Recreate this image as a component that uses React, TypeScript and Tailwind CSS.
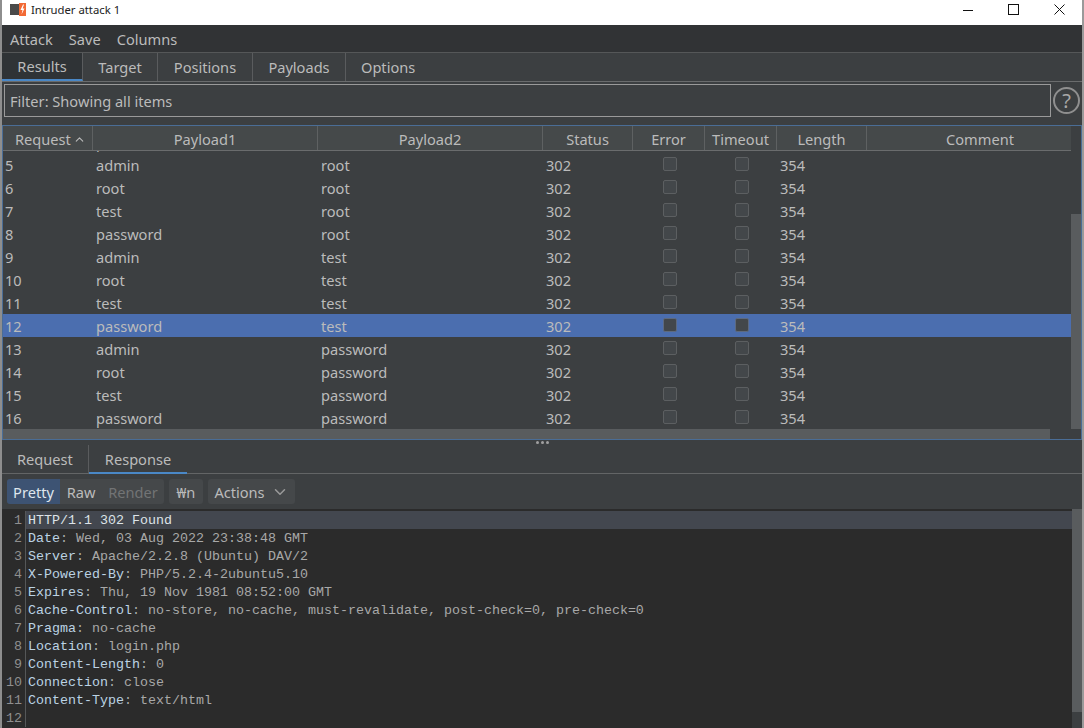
import { ChevronDown, ChevronUp } from 'lucide-react';

// Results table rows: request number, payload1, payload2
const rows: [number, string, string][] = [
    [4, 'password', 'admin'],
    [5, 'admin', 'root'],
    [6, 'root', 'root'],
    [7, 'test', 'root'],
    [8, 'password', 'root'],
    [9, 'admin', 'test'],
    [10, 'root', 'test'],
    [11, 'test', 'test'],
    [12, 'password', 'test'],
    [13, 'admin', 'password'],
    [14, 'root', 'password'],
    [15, 'test', 'password'],
    [16, 'password', 'password'],
];

const headers = ['Payload1', 'Payload2', 'Status', 'Error', 'Timeout', 'Length'];

// Response lines: header name and value
const responseLines: [string, string][] = [
    ['Date', 'Wed, 03 Aug 2022 23:38:48 GMT'],
    ['Server', 'Apache/2.2.8 (Ubuntu) DAV/2'],
    ['X-Powered-By', 'PHP/5.2.4-2ubuntu5.10'],
    ['Expires', 'Thu, 19 Nov 1981 08:52:00 GMT'],
    ['Cache-Control', 'no-store, no-cache, must-revalidate, post-check=0, pre-check=0'],
    ['Pragma', 'no-cache'],
    ['Location', 'login.php'],
    ['Content-Length', '0'],
    ['Connection', 'close'],
    ['Content-Type', 'text/html'],
];

const gridCols = 'grid grid-cols-[90px_225px_225px_90px_72px_72px_90px_1fr]';

const Checkbox = ({ selected }: { selected: boolean }) => (
    <div className="flex justify-center pl-[2px] -mt-px">
        <div
            className={`w-[14px] h-[14px] rounded-[2px] border ${
                selected ? 'bg-[#43474a] border-[#5d6a80]' : 'bg-[#43474a] border-[#5c5f61]'
            }`}
        />
    </div>
);

const App = () => {
    return (
        <div className="w-[1084px] h-[728px] overflow-hidden flex flex-col bg-[#3c3f41] text-[14.6px] leading-[20px] text-[#bbbbbb] font-['Noto_Sans',sans-serif] border-l-2 border-r-2 border-l-[#8e8e8e] border-r-[#9a9a9a]">
            {/* Title bar */}
            <div className="h-[25px] shrink-0 bg-white flex items-center text-black -mx-[2px] pl-[10px] pb-[6px]">
                <svg width="16" height="13" viewBox="0 0 16 13" className="mr-[5px]">
                    <rect x="0" y="1" width="9" height="11" fill="#4a4a4a" />
                    <rect x="9" y="0" width="7" height="13" fill="#f26a35" />
                    <path d="M13 1.5 L10.5 7 H12.5 L11.5 11.5 L14.5 5.5 H12.7 L14 1.5 Z" fill="#ffffff" />
                </svg>
                <span className="text-[11.3px] text-[#222222]">Intruder attack 1</span>
                <div className="ml-auto flex items-center pr-[19px] gap-[35px]">
                    <svg width="10" height="10" viewBox="0 0 10 10"><path d="M0 5.5H10" stroke="#111" strokeWidth="1" /></svg>
                    <svg width="11" height="11" viewBox="0 0 11 11"><rect x="0.5" y="0.5" width="10" height="10" fill="none" stroke="#111" /></svg>
                    <svg width="11" height="11" viewBox="0 0 11 11"><path d="M0.5 0.5L10.5 10.5M10.5 0.5L0.5 10.5" stroke="#111" strokeWidth="1" /></svg>
                </div>
            </div>

            {/* Menu bar */}
            <div className="h-[28px] shrink-0 bg-[#313335] flex items-center gap-[16px] pl-[8px] border-b border-[#555758]">
                <span>Attack</span>
                <span>Save</span>
                <span>Columns</span>
            </div>

            {/* Main tabs */}
            <div className="h-[29px] shrink-0 flex border-b border-[#6a6c6d]">
                <div className="w-[81px] flex items-center justify-center bg-[#2f3336] border-b-[2px] border-[#4a88c7] border-r border-r-[#5a5c5e]">
                    Results
                </div>
                <div className="w-[75px] flex items-center justify-center border-r border-[#5a5c5e]">Target</div>
                <div className="w-[95px] flex items-center justify-center border-r border-[#5a5c5e]">Positions</div>
                <div className="w-[93px] flex items-center justify-center border-r border-[#5a5c5e]">Payloads</div>
                <div className="pl-[15px] flex items-center">Options</div>
            </div>

            {/* Filter bar */}
            <div className="h-[43px] shrink-0 flex pt-[2px] pl-[2px]">
                <div className="w-[1047px] h-[33px] border border-[#9a9a9a] flex items-center pl-[5px]">
                    Filter: Showing all items
                </div>
                <div className="ml-[2px] mt-[3px] w-[27px] h-[27px] rounded-full border-2 border-[#8f8f8f] text-[#a8a8a8] text-[20px] flex items-center justify-center">
                    ?
                </div>
            </div>

            {/* Results table */}
            <div className="h-[315px] shrink-0 border border-[#4a6d96] flex flex-col">
                <div className="flex-1 flex min-h-0">
                    <div className="w-[1068px] flex flex-col min-h-0">
                        {/* Table header */}
                        <div className={`${gridCols} h-[25px] shrink-0 bg-[#45494a] border-b border-[#6a6c6d]`}>
                            <div className="flex items-center pl-[12px] gap-[2px] pt-[2px] border-r border-[#5e6162]">
                                Request <ChevronUp size={13} />
                            </div>
                            {headers.map((header) => (
                                <div key={header} className="flex items-center justify-center pt-[2px] border-r border-[#5e6162]">
                                    {header}
                                </div>
                            ))}
                            <div className="flex items-center justify-center pt-[2px] pl-[22px]">Comment</div>
                        </div>
                        {/* Table body */}
                        <div className="flex-1 overflow-hidden">
                            {rows.map(([id, p1, p2], i) => {
                                const selected = id === 12;
                                return (
                                    <div
                                        key={id}
                                        className={`${gridCols} h-[23px] items-center ${i === 0 ? '-mt-[21px]' : ''} ${
                                            selected ? 'bg-[#4b6eaf]' : ''
                                        }`}
                                    >
                                        <div className="pl-[2px]">{id}</div>
                                        <div className="pl-[3px]">{p1}</div>
                                        <div className="pl-[3px]">{p2}</div>
                                        <div className="pl-[3px]">302</div>
                                        <Checkbox selected={selected} />
                                        <Checkbox selected={selected} />
                                        <div className="pl-[3px]">354</div>
                                        <div />
                                    </div>
                                );
                            })}
                        </div>
                    </div>
                    {/* Vertical scrollbar */}
                    <div className="w-[10px] flex flex-col justify-end">
                        <div className="h-[215px] bg-[#595c5e]" />
                    </div>
                </div>
                {/* Horizontal scrollbar */}
                <div className="h-[10px] shrink-0">
                    <div className="h-full w-[1047px] bg-[#595c5e]" />
                </div>
            </div>

            {/* Splitter */}
            <div className="h-[5px] shrink-0 flex justify-center items-center gap-[2px]">
                <div className="w-[3px] h-[3px] rounded-full bg-[#a0a0a0]" />
                <div className="w-[3px] h-[3px] rounded-full bg-[#a0a0a0]" />
                <div className="w-[3px] h-[3px] rounded-full bg-[#a0a0a0]" />
            </div>

            {/* Request / Response tabs */}
            <div className="h-[29px] shrink-0 flex border-b border-[#636566]">
                <div className="w-[87px] flex items-center pl-[15px] border-r border-[#5a5c5e]">Request</div>
                <div className="w-[98px] flex items-center justify-center border-b-[2px] -mb-px border-[#4a88c7]">Response</div>
            </div>

            {/* Editor toolbar */}
            <div className="h-[35px] shrink-0 flex items-center pl-[5px] gap-[5px]">
                <div className="h-[25px] w-[157px] flex rounded-[3px] overflow-hidden bg-[#45484a]">
                    <div className="w-[53px] flex items-center justify-center bg-[#3d5373] text-[#dfe6ee]">Pretty</div>
                    <div className="w-[42px] flex items-center justify-center">Raw</div>
                    <div className="w-[62px] flex items-center justify-center text-[#727475]">Render</div>
                </div>
                <div className="h-[25px] w-[34px] flex items-center justify-center rounded-[3px] bg-[#45484a]">₩n</div>
                <div className="h-[25px] w-[87px] flex items-center justify-center gap-[6px] rounded-[3px] bg-[#45484a]">
                    Actions <ChevronDown size={18} className="text-[#9a9a9a]" />
                </div>
            </div>

            {/* Response viewer */}
            <div className="flex-1 min-h-0 flex bg-[#2b2b2b] font-['Liberation_Mono',monospace] text-[13.33px] leading-[18px] text-[#a8a8a8]">
                <div className="flex-1 min-w-0 pt-[2px]">
                    <div className="flex h-[18px] bg-[#43474f]">
                        <div className="w-[20px] pr-[3px] pt-px text-right bg-[#2b2b2b] border-r border-[#555758] box-content text-[#8f8f8f]">1</div>
                        <div className="pl-[2px] pt-px text-[#dde3e8]">HTTP/1.1 302 Found</div>
                    </div>
                    {responseLines.map(([name, value], i) => (
                        <div key={name} className="flex h-[18px]">
                            <div className="w-[20px] pr-[3px] pt-px text-right border-r border-[#555758] box-content text-[#8f8f8f]">{i + 2}</div>
                            <div className="pl-[2px] pt-px whitespace-pre">
                                <span className="text-[#bcd3e4]">{name}</span>: {value}
                            </div>
                        </div>
                    ))}
                    <div className="flex h-[18px]">
                        <div className="w-[20px] pr-[3px] pt-px text-right border-r border-[#555758] box-content text-[#8f8f8f]">12</div>
                    </div>
                </div>
                {/* Vertical scrollbar */}
                <div className="w-[10px] shrink-0 bg-[#3c3f41]">
                    <div className="h-[203px] bg-[#595c5e]" />
                </div>
            </div>
        </div>
    );
};

export default App;
